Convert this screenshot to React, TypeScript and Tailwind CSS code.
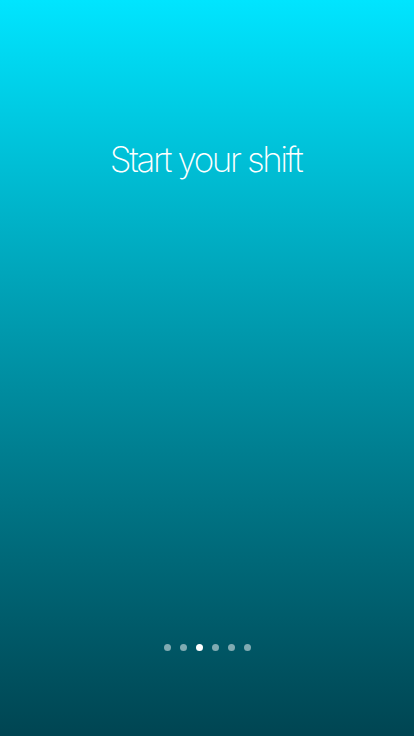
export default function App() {
  const dots = [0, 1, 2, 3, 4, 5];
  const active = 2;

  return (
    <div className="flex flex-col items-center w-[414px] h-[736px] bg-gradient-to-b from-[#00e5ff] to-[#004552] font-['Inter',sans-serif]">
      <h1 className="mt-[137px] mr-[3px] text-[35px] leading-[44px] font-extralight tracking-[-2.4px] text-white">
        Start your shift
      </h1>

      <div className="mt-auto mb-[85px] flex items-center gap-[9px]">
        {dots.map((d) => (
          <span
            key={d}
            className={
              d === active
                ? 'block w-[7px] h-[7px] rounded-full bg-white'
                : 'block w-[7px] h-[7px] rounded-full bg-white/50'
            }
          />
        ))}
      </div>
    </div>
  );
}
